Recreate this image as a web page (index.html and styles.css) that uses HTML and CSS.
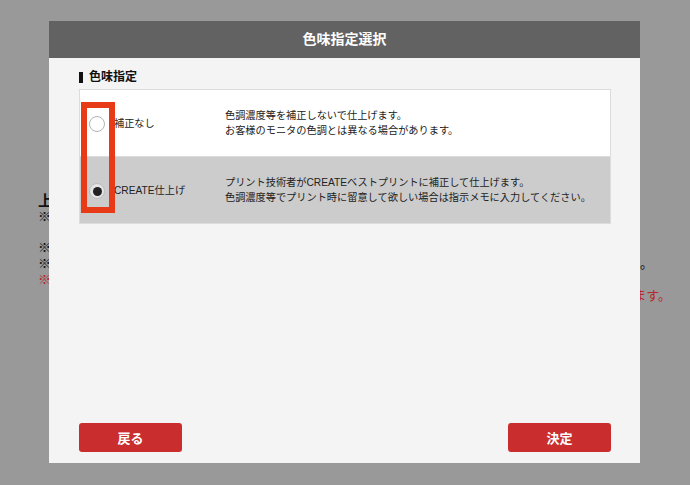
FILE: index.html
```html
<!DOCTYPE html>
<html lang="ja">
  <head>
    <meta charset="UTF-8" />
    <meta name="viewport" content="width=device-width, initial-scale=1.0" />
    <title>色味指定選択</title>
    <link rel="stylesheet" href="styles.css">
  </head>
  <body>
    <div class="page">
      <p class="lead">上記確認</p>
      <p class="note">※ 注意事項</p>
      <p class="note gap">※ 色味指定はプリント1枚ごとに変更することができます。</p>
      <p class="note line"><span>※ 指示メモの内容によっては、ご希望に添えない場合もございますので、あらかじめご了承ください</span><span>。</span></p>
      <p class="note red">
        <span class="red-line">※ 補正内容についてのお問い合わせは、注文番号を添えて</span>
        <span class="red-line red-end"><span>お問い合わせフォームよりご連絡ください。受付後、担当者よりご連絡いたします。</span></span>
      </p>
    </div>

    <div class="modal">
      <div class="modal-head">色味指定選択</div>
      <div class="modal-body">
        <h2 class="section-title">色味指定</h2>
        <div class="options">
          <label class="option">
            <span class="option-name">
              <span class="radio"></span>
              補正なし
            </span>
            <span class="option-desc">色調濃度等を補正しないで仕上げます。<br>お客様のモニタの色調とは異なる場合があります。</span>
          </label>
          <label class="option selected">
            <span class="option-name">
              <span class="radio checked"></span>
              CREATE仕上げ
            </span>
            <span class="option-desc">プリント技術者がCREATEベストプリントに補正して仕上げます。<br>色調濃度等でプリント時に留意して欲しい場合は指示メモに入力してください。</span>
          </label>
          <div class="highlight"></div>
        </div>
        <div class="actions">
          <button type="button" class="btn">戻る</button>
          <button type="button" class="btn">決定</button>
        </div>
      </div>
    </div>
  </body>
</html>
```

FILE: styles.css
```css
body {
  margin: 0;
  background-color: #999;
  font-family: "Liberation Sans", "Noto Sans CJK JP", sans-serif;
  color: #111;
}
p {
  margin: 0;
}
.page {
  padding: 192px 0 0 38px;
  width: 640px;
}
.lead {
  font-size: 15px;
  font-weight: bold;
  line-height: 17px;
}
.note {
  font-size: 13px;
  line-height: 16px;
  white-space: nowrap;
  overflow: hidden;
}
.gap {
  margin-top: 15px;
}
.line {
  display: flex;
  width: 615px;
}
.line span:first-child {
  min-width: 0;
  overflow: hidden;
}
.line span:last-child {
  margin-left: auto;
}
.red {
  color: #b8282a;
}
.red-line {
  display: block;
  width: 590px;
  overflow: hidden;
}
.red-end {
  display: flex;
  justify-content: flex-end;
  width: 620px;
  margin-left: 13px;
}
.red-end span {
  flex-shrink: 0;
}

.modal {
  position: absolute;
  left: 49px;
  top: 21px;
  width: 591px;
  height: 442px;
  background-color: #f4f4f4;
  display: flex;
  flex-direction: column;
}
.modal-head {
  height: 37px;
  line-height: 37px;
  background-color: #626262;
  color: #fff;
  font-size: 14px;
  font-weight: bold;
  text-align: center;
}
.modal-body {
  flex: 1;
  display: flex;
  flex-direction: column;
  padding: 12px 29px 11px 30px;
}
.section-title {
  margin: 0 0 5px;
  font-size: 12px;
  line-height: 14px;
  display: flex;
  align-items: center;
  gap: 6px;
}
.section-title::before {
  content: "";
  width: 4px;
  height: 11px;
  background-color: #111;
}
.options {
  position: relative;
  border: 1px solid #dcdcdc;
}
.option {
  display: flex;
  align-items: center;
  height: 66px;
  background-color: #fff;
  font-size: 10.2px;
  line-height: 15px;
  color: #222;
}
.option + .option {
  border-top: 1px solid #dcdcdc;
}
.option.selected {
  background-color: #cccccc;
}
.option-name {
  width: 145px;
  padding-left: 9px;
  box-sizing: border-box;
  display: flex;
  align-items: center;
  gap: 9px;
}
.option-desc {
  flex: 1;
}
.radio {
  width: 16px;
  height: 16px;
  border-radius: 50%;
  border: 1px solid #b4b4b4;
  background-color: #fff;
  box-sizing: border-box;
  margin-top: 2px;
  display: flex;
  align-items: center;
  justify-content: center;
}
.radio.checked {
  background-color: #e4e4e4;
  border-color: #bdbdbd;
}
.radio.checked::after {
  content: "";
  width: 9px;
  height: 9px;
  border-radius: 50%;
  background-color: #222;
}
.highlight {
  position: absolute;
  left: 1px;
  top: 12px;
  width: 34px;
  height: 111px;
  border: 6px solid #e63b16;
  box-sizing: border-box;
}
.actions {
  margin-top: auto;
  display: flex;
  justify-content: space-between;
}
.btn {
  width: 103px;
  height: 29px;
  border: none;
  border-radius: 3px;
  background-color: #c92d2e;
  color: #fff;
  font-family: "Liberation Sans", "Noto Sans CJK JP", sans-serif;
  font-size: 13px;
  font-weight: bold;
  cursor: pointer;
}
```
